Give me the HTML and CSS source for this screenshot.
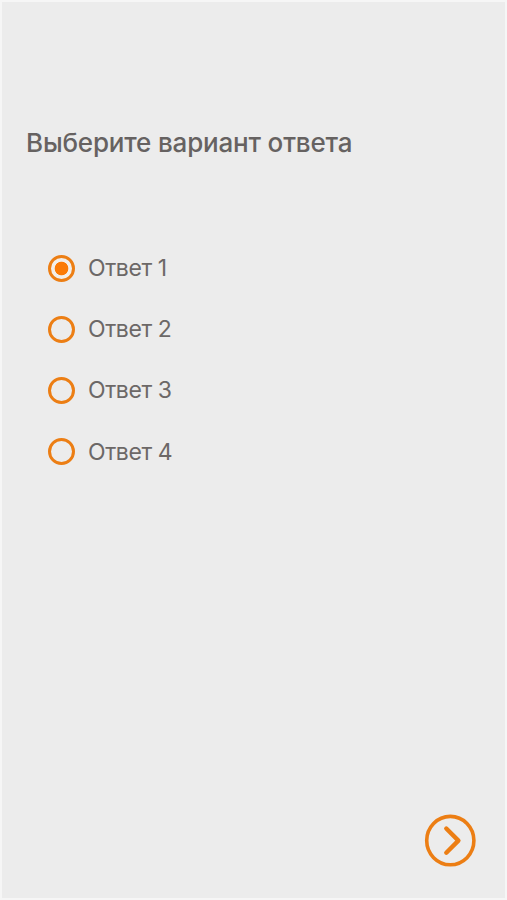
FILE: index.html
```html
<!DOCTYPE html>
<html lang="ru">
<head>
<meta charset="utf-8">
<title>Выберите вариант ответа</title>
<link rel="stylesheet" href="styles.css">
</head>
<body>
<main class="screen">
  <h1 class="title">Выберите вариант ответа</h1>
  <div class="options">
    <label class="option"><input type="radio" name="answer" class="radio" checked><span class="label">Ответ 1</span></label>
    <label class="option"><input type="radio" name="answer" class="radio"><span class="label">Ответ 2</span></label>
    <label class="option"><input type="radio" name="answer" class="radio"><span class="label">Ответ 3</span></label>
    <label class="option"><input type="radio" name="answer" class="radio"><span class="label">Ответ 4</span></label>
  </div>
  <button class="next" type="button" aria-label="Далее">
    <svg viewBox="0 0 52 53" width="52" height="53" fill="none" stroke="currentColor">
      <ellipse cx="26.3" cy="26.6" rx="23.6" ry="24.2" stroke-width="3.6"/>
      <path d="M22.3 14.5 34.4 26.6 22.3 38.7" stroke-width="4.4" stroke-linecap="round" stroke-linejoin="round"/>
    </svg>
  </button>
</main>
</body>
</html>
```
FILE: styles.css
```css
* { box-sizing: border-box; }
body { margin: 0; }
.screen {
  display: flex;
  flex-direction: column;
  width: 507px;
  height: 900px;
  padding: 121px 29px 31px 24px;
  background: #ececec;
  border: 2px solid #f6f6f6;
  color: #666261;
  font-family: Inter, sans-serif;
}
.title {
  margin: 0;
  font-size: 26px;
  line-height: 40px;
  font-weight: 500;
  letter-spacing: -0.18px;
  white-space: nowrap;
}
.options {
  display: flex;
  flex-direction: column;
  gap: 33.2px;
  margin: 91px 0 0 22px;
}
.option {
  display: flex;
  align-items: center;
  gap: 13px;
  height: 28px;
}
.radio {
  appearance: none;
  width: 27px;
  height: 27px;
  margin: 0;
  border: 3px solid #ec7e14;
  border-radius: 50%;
}
.radio:checked {
  background: radial-gradient(circle, #fb7a05 6.4px, #f3eee8 7.2px);
}
.label {
  font-size: 23px;
  line-height: 28px;
  letter-spacing: -0.4px;
  color: #6c6867;
}
.next {
  align-self: flex-end;
  margin-top: auto;
  padding: 0;
  border: 0;
  background: none;
  color: #ec7e14;
  line-height: 0;
}
```
